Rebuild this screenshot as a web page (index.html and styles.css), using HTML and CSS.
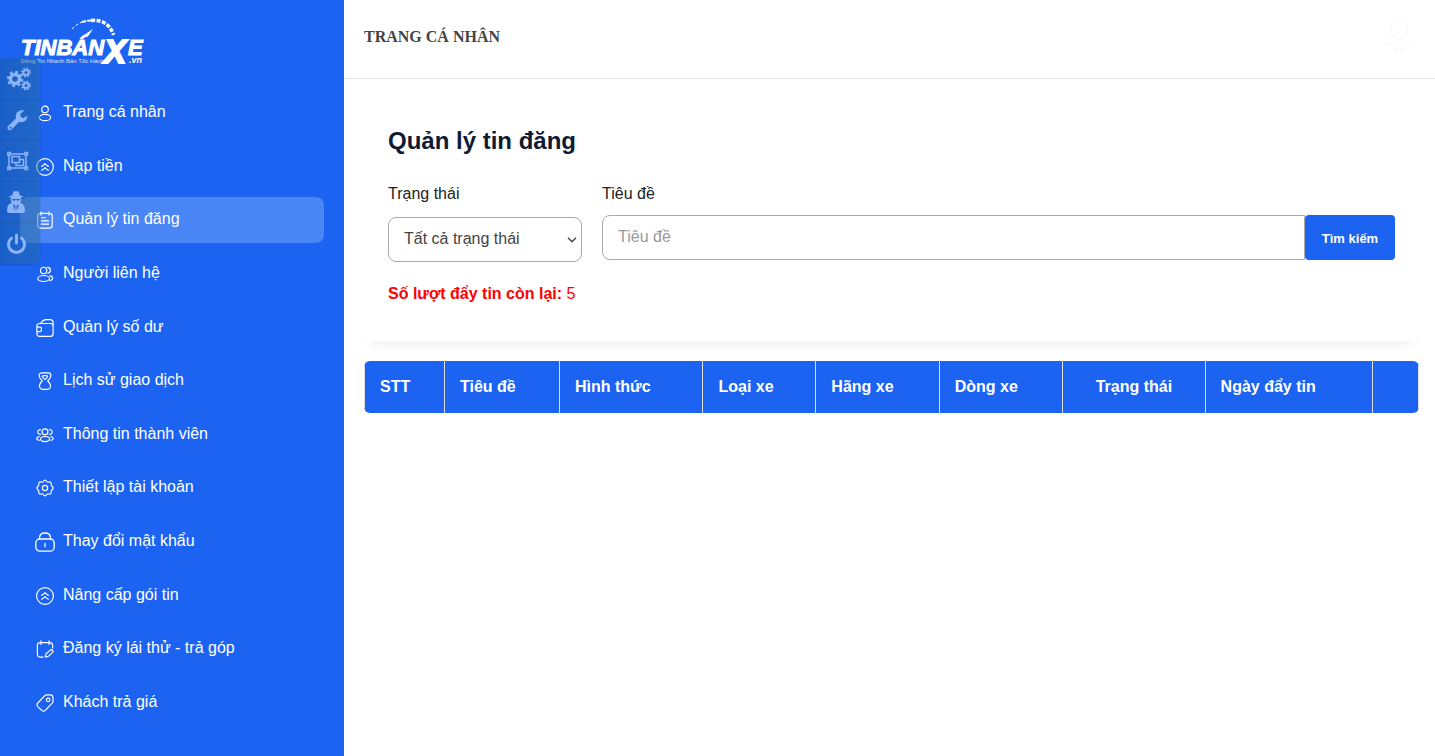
FILE: index.html
```html
<!DOCTYPE html>
<html lang="vi">
<head>
  <meta charset="UTF-8">
  <meta name="viewport" content="width=device-width, initial-scale=1.0">
  <title>Quản lý tin đăng</title>
  <link rel="stylesheet" href="styles.css">
</head>
<body>
  <!-- Shared icon -->
  <svg class="icon-defs" aria-hidden="true">
    <symbol id="icon-up" viewBox="0 0 20 20">
      <circle cx="10" cy="10" r="9.3"/>
      <path d="M6.3 9.3C7.8 8.5 9 7.5 10 6.3c1 1.2 2.2 2.2 3.7 3M6.3 13.7c1.5-.8 2.7-1.8 3.7-3 1 1.2 2.2 2.2 3.7 3"/>
    </symbol>
  </svg>

  <div class="layout">
    <!-- Sidebar -->
    <aside class="sidebar">
      <a class="logo" href="#" aria-label="TinBanXe.vn">
        <svg width="132" height="56" viewBox="-1 -1 132 56">
          <g fill="none" stroke="#fff">
            <path d="M51 12Q56 7 61 5" stroke-width="1" stroke-dasharray="3 2"/>
            <path d="M61 5Q66 3.500 70 3.500" stroke-width="2" stroke-dasharray="4 1"/>
            <path d="M70 3.500C81 2.500 89 7 92.500 18" stroke-width="3.500" stroke-dasharray="4 1.500"/>
          </g>
          <path d="M72 12l-5.500 8-3.500-2z" fill="#fff"/>
          <g class="logo-name">
            <text x="0" y="38">TINBÁN</text>
            <text class="logo-x" x="83" y="46">X</text>
            <text x="107" y="38">E</text>
          </g>
          <text class="logo-vn" x="108" y="46">.vn</text>
          <text class="logo-slogan" x="0" y="46">Đăng Tin Nhanh Bán Tốc Hành</text>
        </svg>
      </a>

      <nav class="menu">
        <a class="menu-item" href="#">
          <svg class="icon" viewBox="0 0 20 20"><circle cx="10" cy="6" r="3.700"/><ellipse cx="10" cy="15" rx="6.300" ry="3.500"/></svg>
          Trang cá nhân
        </a>
        <a class="menu-item" href="#">
          <svg class="icon"><use href="#icon-up"/></svg>
          Nạp tiền
        </a>
        <a class="menu-item active" href="#" aria-current="page">
          <svg class="icon" viewBox="0 0 20 20"><path d="M5 2.700h10q3 0 3 3V16q0 3-3 3H5q-3 0-3-3V5.700q0-3 3-3zM5.500 1v3.500M14.500 1v3.500M6 7.500h4.500M6 11h8M6 14.500h8"/></svg>
          Quản lý tin đăng
        </a>
        <a class="menu-item" href="#">
          <svg class="icon" viewBox="0 0 20 20"><circle cx="8.500" cy="6" r="3.500"/><ellipse cx="8.500" cy="15" rx="6.500" ry="3.300"/><path d="M13 2.700c4 .3 4 6 0 6.500M15.500 12c4 .5 4 4.500 0 5.500"/></svg>
          Người liên hệ
        </a>
        <a class="menu-item" href="#">
          <svg class="icon" viewBox="0 0 20 20"><path d="M1 9V8q0-3 3-3h12q3 0 3 3v8q0 3.300-3 3.300H4q-3 0-3-3.300v-1M1 9h3.500q1.500 0 1.500 1.500v2q0 1.500-1.500 1.500H1V9M5 5q3-4.300 6-4.300h4.500q3.500 0 3.500 3.500V9M4 5h12"/></svg>
          Quản lý số dư
        </a>
        <a class="menu-item" href="#">
          <svg class="icon" viewBox="0 0 20 20"><path d="M6.500 1h7q3 0 3 3 0 3-3.500 6 4 4 3 6.500-.8 2.800-3 2.800H7q-2.200 0-3-2.800Q3 14 7 10 3.500 7 3.500 4q0-3 3-3zM7 4.500q3-1 6 0-.5 2-3 4-2.500-2-3-4z"/></svg>
          Lịch sử giao dịch
        </a>
        <a class="menu-item" href="#">
          <svg class="icon" viewBox="0 0 20 20"><circle cx="10" cy="6.500" r="3.300"/><ellipse cx="10" cy="14.500" rx="5" ry="2.800"/><path d="M5 9.300C.8 9.300 1.300 3.500 5 4M15 9.300c4.200 0 3.700-5.800 0-5.300M3.500 11.800c-3.700.7-3.700 3.500 0 4.200M16.500 11.800c3.700.7 3.700 3.500 0 4.200"/></svg>
          Thông tin thành viên
        </a>
        <a class="menu-item" href="#">
          <svg class="icon" viewBox="0 0 20 20"><circle cx="10" cy="10" r="2.900"/><path d="M8 2.800q2-3 4 0 .8 1 2 .5 3.400-.6 2.900 2.700-.3 1.300 1 2 2.200 2 0 4-1.300.7-1 2 .5 3.300-2.900 2.700-1.200-.5-2 .5-2 3-4 0-.8-1-2-.5-3.400.6-2.900-2.700.3-1.300-1-2-2.200-2 0-4 1.300-.7 1-2-.5-3.300 2.900-2.700 1.200.5 2-.5z"/></svg>
          Thiết lập tài khoản
        </a>
        <a class="menu-item" href="#">
          <svg class="icon icon-lock" viewBox="0 0 20 20"><rect x="0.800" y="7" width="18.400" height="12.200" rx="4"/><path d="M4.500 7V6q0-5 5.500-5t5.500 5v1M10 11.500v3"/></svg>
          Thay đổi mật khẩu
        </a>
        <a class="menu-item" href="#">
          <svg class="icon"><use href="#icon-up"/></svg>
          Nâng cấp gói tin
        </a>
        <a class="menu-item" href="#">
          <svg class="icon" viewBox="0 0 20 20"><path d="M8 19H5q-3.500 0-3.500-3.500V6Q1.500 3 5 3h10q3.500 0 3.500 3v3M5.500.8V5M14.500.8V5M10.500 19l.5-3.500 5.500-4.800q2.500 0 2.500 2.500L14 18z"/></svg>
          Đăng ký lái thử - trả góp
        </a>
        <a class="menu-item" href="#">
          <svg class="icon" viewBox="0 0 20 20"><path d="M2 10l7.500-8q1-1 2.500-1h4q2.500 0 2.700 2.500l.3 4.300q0 1.400-1 2.400l-7.700 8q-2 1.800-4 0L2 14q-1.800-2 0-4z"/><circle cx="13.500" cy="6.500" r="2"/></svg>
          Khách trả giá
        </a>
      </nav>
    </aside>

    <!-- Content -->
    <div class="content">
      <header class="topbar">
        <span class="topbar-title">TRANG CÁ NHÂN</span>
        <svg class="avatar" viewBox="0 0 40 40" aria-hidden="true"><path d="M12 12c-1-14 17-14 16 0-1 7-3 11-8 11s-7-4-8-11zM3 29l11-4 4 3-1 8M37 29l-11-4-4 3 1 8"/></svg>
      </header>

      <main class="page">
        <section class="card">
          <h1>Quản lý tin đăng</h1>
          <form class="filter">
            <div class="field">
              <label for="status">Trạng thái</label>
              <div class="select-box">
                <select id="status">
                  <option>Tất cả trạng thái</option>
                </select>
                <svg class="chevron" viewBox="0 0 10 6" aria-hidden="true"><path d="M1 .8l4 4 4-4"/></svg>
              </div>
            </div>
            <div class="field field-title">
              <label for="title">Tiêu đề</label>
              <div class="search">
                <input id="title" type="text" placeholder="Tiêu đề">
                <button type="button">Tìm kiếm</button>
              </div>
            </div>
          </form>
          <p class="remaining"><strong>Số lượt đẩy tin còn lại:</strong> 5</p>
        </section>

        <table class="posts">
          <colgroup>
            <col class="col-stt">
            <col class="col-title">
            <col class="col-type">
            <col class="col-kind">
            <col class="col-brand">
            <col class="col-model">
            <col class="col-status">
            <col class="col-date">
            <col>
          </colgroup>
          <thead>
            <tr>
              <th>STT</th>
              <th>Tiêu đề</th>
              <th>Hình thức</th>
              <th>Loại xe</th>
              <th>Hãng xe</th>
              <th>Dòng xe</th>
              <th class="center">Trạng thái</th>
              <th>Ngày đẩy tin</th>
              <th></th>
            </tr>
          </thead>
        </table>
      </main>
    </div>
  </div>

  <!-- Floating toolbar -->
  <div class="toolbar">
    <button type="button" aria-label="Cài đặt">
      <svg width="26" height="24" viewBox="0 0 26 24">
        <g fill="none" stroke="currentColor">
          <circle cx="8" cy="12" r="4.500" stroke-width="3.500"/>
          <circle cx="8" cy="12" r="7" stroke-width="2.400" stroke-dasharray="2.750 2.750"/>
          <circle cx="19" cy="5.500" r="2.600" stroke-width="2"/>
          <circle cx="19" cy="5.500" r="4.200" stroke-width="1.600" stroke-dasharray="1.650 1.650"/>
          <circle cx="19" cy="18.500" r="2.600" stroke-width="2"/>
          <circle cx="19" cy="18.500" r="4.200" stroke-width="1.600" stroke-dasharray="1.650 1.650"/>
        </g>
      </svg>
    </button>
    <button type="button" aria-label="Công cụ">
      <svg width="22" height="22" viewBox="0 0 22 22"><path fill="currentColor" fill-rule="evenodd" d="M.8 17.500l8.300-8.300C7.600 4 12.300 0 17.300 1.700l-4 3.100.4 3 2.600 1.400 4-2.500c.2 5-4 7.600-8.200 6.100l-8 8.100c-2 1.600-5-1.300-3.300-3.400zM3.500 17.800a1 1 0 1 0 .1 0z"/></svg>
    </button>
    <button type="button" aria-label="Nhóm">
      <svg width="22" height="20" viewBox="0 0 22 20"><g fill="none" stroke="currentColor" stroke-width="1.500"><path d="M2 3h17v14H2zM5 5.500h7.500v6H5zM12.500 8.500h4v6H9v-3"/><path fill="#2068cf" d="M.8 1.500h2.500V4H.8zM18 1.500h2.500V4H18zM.8 16h2.500v2.500H.8zM18 16h2.500v2.500H18z"/></g></svg>
    </button>
    <button type="button" aria-label="Người dùng ẩn danh">
      <svg width="18" height="22" viewBox="0 0 18 22"><path fill="currentColor" fill-rule="evenodd" d="M2 5.300l3-.8L6.500.5q1-.8 2.500 0 1.500-.8 2.500 0L13 4.500l3 .8q.5.900-2.500 1.400l1 1.800-1.200 3.200 2 1Q18 14 18 20q0 2-2 2H2q-2 0-2-2 0-6 2.700-7.300l2-1-1.200-3.200 1-1.800Q1.500 6.200 2 5.300zM5 8q.5 2 2 1.800Q8.500 9.500 9 8q.5 1.500 2 1.800 1.500.2 2-1.800zM6 13l2 7 .5-5zM12 13l-2 7-.5-5z"/></svg>
    </button>
    <button type="button" aria-label="Đăng xuất">
      <svg width="20" height="22" viewBox="0 0 20 22"><path fill="none" stroke="currentColor" stroke-width="3" stroke-linecap="round" d="M9.500 2v8M4.500 5.200a8 8 0 1 0 10 0"/></svg>
    </button>
  </div>
</body>
</html>
```
FILE: styles.css
```css
* {
  margin: 0;
  padding: 0;
  box-sizing: border-box;
}

body {
  font-family: "Liberation Sans", Arial, sans-serif;
  font-size: 16px;
  line-height: 24px;
  color: #222;
  background: #fff;
}

a {
  color: inherit;
  text-decoration: none;
}

button,
input,
select {
  font-family: inherit;
}

.icon-defs {
  position: absolute;
  width: 0;
  height: 0;
}

.layout {
  display: flex;
  min-height: 100vh;
}

/* Sidebar */
.sidebar {
  width: 344px;
  flex-shrink: 0;
  display: flex;
  flex-direction: column;
  gap: 18px;
  padding: 16px 20px 30px;
  background: #1c63f2;
  color: #fff;
}

.logo,
.logo svg {
  display: block;
}

.logo text {
  fill: #fff;
}

.logo-name {
  font-size: 22px;
  font-weight: bold;
  font-style: italic;
}

.logo-name text {
  stroke: #fff;
  stroke-width: 1px;
}

.logo-name .logo-x {
  font-size: 33px;
  stroke-width: 2px;
}

.logo-vn {
  font-size: 9px;
  font-weight: bold;
  font-style: italic;
}

.logo-slogan {
  font-size: 6px;
  opacity: 0.8;
}

.menu {
  flex: 1;
  display: flex;
  flex-direction: column;
  justify-content: space-between;
}

.menu-item {
  display: flex;
  align-items: center;
  gap: 8px;
  height: 46px;
  padding: 0 15px 2px;
  border-radius: 8px;
}

.menu-item.active {
  background: #4985f5;
}

.icon {
  width: 20px;
  height: 18px;
  margin-top: 2px;
  fill: none;
  stroke: #fff;
  stroke-width: 1.300;
  stroke-linecap: round;
  stroke-linejoin: round;
}

.icon-lock {
  height: 20px;
}

/* Top bar */
.content {
  flex: 1;
  min-width: 0;
}

.topbar {
  display: flex;
  justify-content: space-between;
  padding: 17px 16px 21px 20px;
  border-bottom: 1px solid #e5e5e5;
}

.topbar-title {
  font-family: "Liberation Serif", "Times New Roman", serif;
  font-weight: bold;
  line-height: 40px;
  color: #444;
}

.avatar {
  width: 40px;
  height: 40px;
  fill: none;
  stroke: #f7f7f7;
}

/* Filter card */
.page {
  padding: 20px 16px 20px 20px;
}

.card {
  padding: 24px 24px 35px;
  border-radius: 8px;
  box-shadow: 0 10px 12px -6px rgba(0, 0, 0, 0.06);
}

.card h1 {
  font-size: 24px;
  line-height: 36px;
  color: #0f1b33;
}

.filter {
  display: flex;
  gap: 20px;
  margin-top: 23px;
}

.field {
  display: flex;
  flex-direction: column;
  gap: 11px;
}

.field-title {
  flex: 1;
  gap: 9px;
}

.select-box {
  display: grid;
  align-items: center;
  width: 194px;
}

.select-box select,
.chevron {
  grid-area: 1 / 1;
}

.select-box select,
.search input {
  width: 100%;
  height: 45px;
  padding: 0 15px 2px;
  border: 1px solid #aaa;
  border-radius: 8px;
  background: #fff;
  font-size: 16px;
  color: #444;
}

.select-box select {
  appearance: none;
}

.chevron {
  justify-self: end;
  width: 10px;
  height: 6px;
  margin-right: 5px;
  fill: none;
  stroke: #444;
  stroke-width: 1.400;
  pointer-events: none;
}

.search {
  display: flex;
}

.search input {
  flex: 1;
  min-width: 0;
  border-radius: 8px 0 0 8px;
}

.search input::placeholder {
  color: #999;
}

.search button {
  width: 90px;
  padding-top: 2px;
  border: none;
  border-radius: 4px;
  background: #1c63f2;
  color: #fff;
  font-size: 13px;
  font-weight: bold;
}

.remaining {
  margin-top: 20px;
  color: #f00;
}

/* Table */
.posts {
  width: 100%;
  margin-top: 20px;
  table-layout: fixed;
  border-collapse: separate;
  border-spacing: 0;
  border-radius: 6px;
  overflow: hidden;
}

.posts th {
  height: 52px;
  padding: 0 15px;
  border-left: 1px solid #ddd;
  background: #1c63f2;
  color: #fff;
  text-align: left;
}

.posts th:last-child {
  border-right: 1px solid #ddd;
}

.posts .center {
  text-align: center;
}

.col-stt {
  width: 80px;
}

.col-title {
  width: 10.900%;
}

.col-type {
  width: 13.600%;
}

.col-kind {
  width: 10.700%;
}

.col-brand,
.col-model {
  width: 11.700%;
}

.col-status {
  width: 13.500%;
}

.col-date {
  width: 15.900%;
}

/* Floating toolbar */
.toolbar {
  position: fixed;
  top: 58px;
  left: 0;
  width: 40px;
  padding-top: 1px;
  border-radius: 0 8px 8px 0;
  background: linear-gradient(to right, rgba(22, 90, 150, 0.45), rgba(42, 110, 150, 0.45));
  box-shadow: 0 1px 2px rgba(0, 0, 0, 0.15);
}

.toolbar button {
  display: flex;
  align-items: center;
  width: 100%;
  height: 41px;
  padding-left: 7px;
  border: none;
  border-bottom: 1px solid rgba(0, 0, 0, 0.08);
  background: none;
  color: #8db4f8;
}

.toolbar button:last-child {
  border-bottom: none;
}
```
